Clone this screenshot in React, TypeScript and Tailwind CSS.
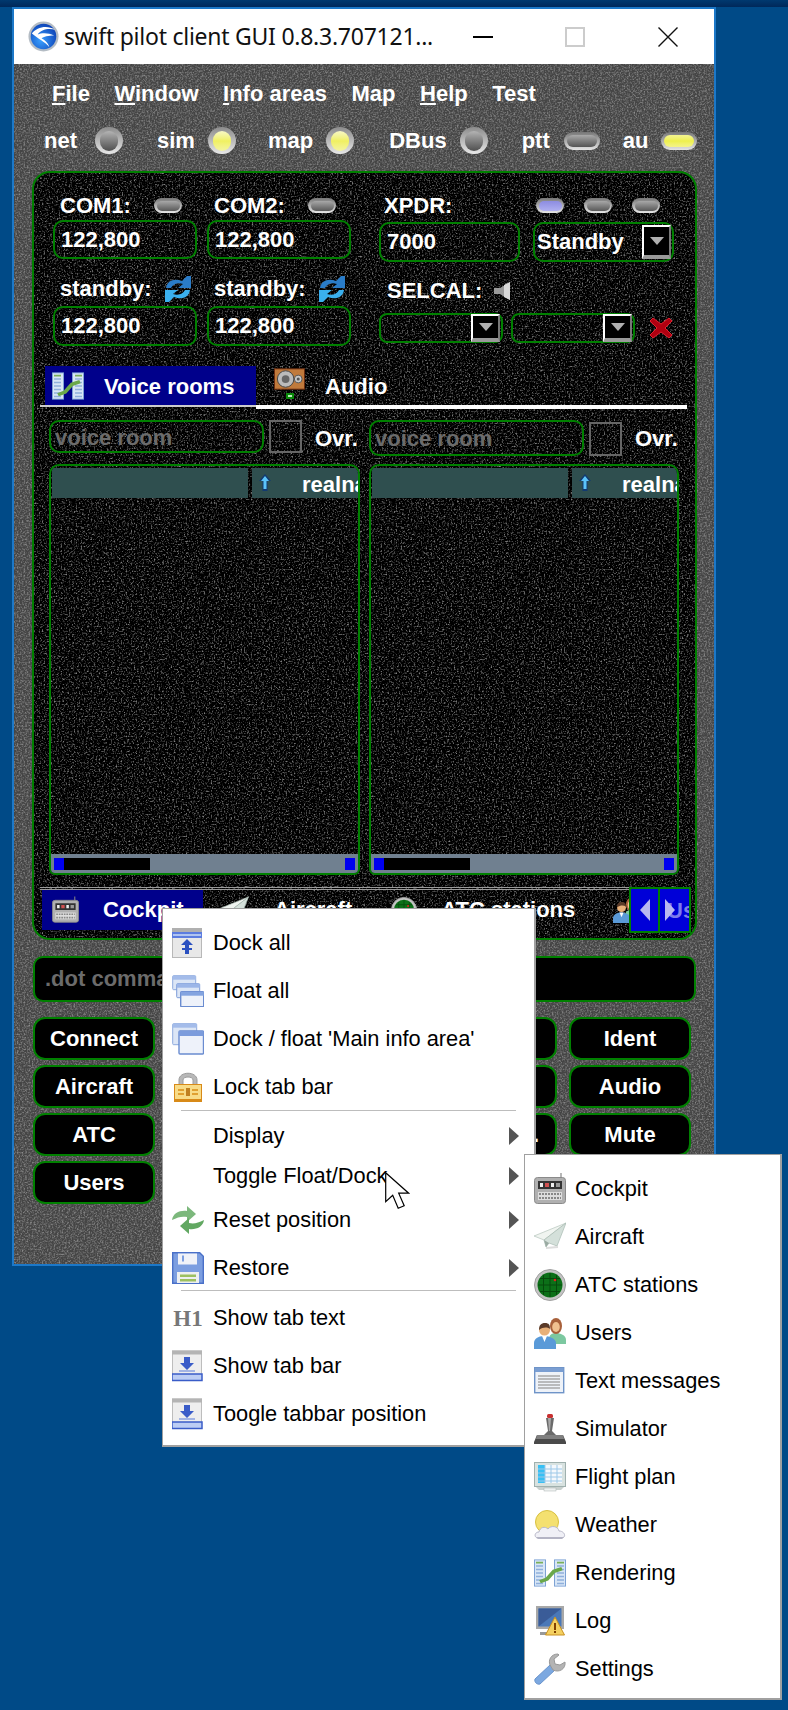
import React from "react";

type IconProps = { className?: string };

const label = "text-[22px] leading-none font-bold text-white whitespace-nowrap";
const faint = "text-[22px] leading-none font-bold whitespace-nowrap text-[#6b6b6b]";
const green = "border-2 border-[#008000]";

// noise texture laid over the grey window and the black panels
function Noise({ id, tone, gain, cut }: { id: string; tone: string; gain: string; cut: string }) {
  return (
    <svg className="absolute inset-0 h-full w-full pointer-events-none" aria-hidden="true">
      <filter id={id} x="0" y="0" width="100%" height="100%">
        <feTurbulence type="fractalNoise" baseFrequency="0.6" numOctaves="2" seed="4" />
        <feColorMatrix values={`0 0 0 0 ${tone} 0 0 0 0 ${tone} 0 0 0 0 ${tone} ${gain} 0 0 0 ${cut}`} />
      </filter>
      <rect width="100%" height="100%" filter={`url(#${id})`} />
    </svg>
  );
}

function Led({ on }: { on?: boolean }) {
  return (
    <div className="flex h-[27px] w-[28px] shrink-0 items-center justify-center rounded-full bg-linear-to-b from-[#8c8c8c] to-[#e8e8e8]">
      {on ? (
        <div className="h-[20px] w-[18px] rounded-full bg-linear-to-b from-[#f8f8c4] via-[#f0f060] to-[#f4f4a0]" />
      ) : (
        <div className="h-[20px] w-[18px] rounded-full bg-linear-to-b from-[#b4b4b4] to-[#505050]" />
      )}
    </div>
  );
}

function Pill({ kind = "off", className = "" }: { kind?: "off" | "blue"; className?: string }) {
  const inner =
    kind === "blue"
      ? "bg-linear-to-b from-[#8c8ce0] to-[#b0b0f0]"
      : "bg-linear-to-b from-[#a8a8a8] to-[#5a5a5a]";
  return (
    <div className={`flex h-[15px] w-[28px] shrink-0 items-center justify-center rounded-full bg-linear-to-b from-[#777] to-[#e8e8e8] ${className}`}>
      <div className={`h-[10px] w-[23px] rounded-full ${inner}`} />
    </div>
  );
}

function DropButton({ big }: { big?: boolean }) {
  return (
    <div
      className={`flex shrink-0 items-center justify-center border-t-2 border-l-2 border-t-white border-l-white border-r-2 border-b-4 border-r-[#777] border-b-[#999] bg-black ${
        big ? "h-[34px] w-[29px]" : "h-[28px] w-[29px]"
      }`}
    >
      <svg viewBox="0 0 14 10" className="h-[10px] w-[14px]">
        <path d="M0 1h14L7 9z" fill="#b0b0b0" />
      </svg>
    </div>
  );
}

function Field({ text, className = "" }: { text: string; className?: string }) {
  return (
    <div className={`flex items-center rounded-[10px] ${green} pl-[6px] ${className}`}>
      <span className={label}>{text}</span>
    </div>
  );
}

function SwiftLogo() {
  return (
    <svg viewBox="0 0 32 32" className="h-[31px] w-[31px] shrink-0">
      <defs>
        <radialGradient id="lg" cx="0.4" cy="0.65" r="0.7">
          <stop offset="0" stopColor="#3aa0ff" />
          <stop offset="1" stopColor="#0b3fb4" />
        </radialGradient>
      </defs>
      <circle cx="16" cy="16" r="15.5" fill="#b4bcc4" />
      <circle cx="16" cy="16" r="13.2" fill="url(#lg)" />
      <path d="M4 13C9 6 20 4 28 9 21 7 13 9 10 14c4-2 11-2 17 1-6 0-11 1-13 3 3 1 7 5 8 9-4-5-12-9-18-14z" fill="#fff" />
    </svg>
  );
}

function RoomsIcon() {
  return (
    <svg viewBox="0 0 32 32" preserveAspectRatio="none" className="h-[28px] w-[32px] shrink-0">
      <rect x="0.500" y="1" width="11" height="30" fill="#d8e6f6" stroke="#7da2d4" />
      <rect x="20.500" y="1" width="11" height="30" fill="#d8e6f6" stroke="#7da2d4" />
      <path d="M2 8h7M2 12h7M2 16h7M2 20h7M2 24h7M2 28h7M23 8h7M23 12h7M23 16h7M23 20h7M23 24h7M23 28h7" stroke="#8fb0dc" strokeWidth="1.600" />
      <path d="M2 4h7M23 4h7" stroke="#7ab05a" strokeWidth="2" />
      <path d="M6 26l7-3 7-9 8-3" fill="none" stroke="#6aa84a" strokeWidth="4" />
    </svg>
  );
}

function SpeakerBoxIcon() {
  return (
    <svg viewBox="0 0 32 22" className="h-[22px] w-[31px] shrink-0">
      <rect x="0.500" y="0.500" width="31" height="21" fill="#c07a3c" stroke="#6a2c10" />
      <circle cx="12" cy="11" r="8.500" fill="#bbb" stroke="#444" />
      <circle cx="12" cy="11" r="4" fill="#666" />
      <circle cx="25" cy="11" r="4" fill="#c8c8c8" stroke="#555" />
      <circle cx="25" cy="11" r="1.600" fill="#555" />
    </svg>
  );
}

function CockpitIcon({ className = "h-[32px] w-[32px]" }: IconProps) {
  return (
    <svg viewBox="0 0 32 32" className={`shrink-0 ${className}`}>
      <path d="M27 0v5" stroke="#888" strokeWidth="1.200" />
      <rect x="0.500" y="4.500" width="31" height="26" rx="3" fill="#b0b0b0" stroke="#8a8a8a" />
      <rect x="4" y="8" width="24" height="8" fill="#333" />
      <path d="M6 10h3v4H6zM17 10h3v4h-3z" fill="#eee" />
      <path d="M11 10h4v4h-4z" fill="#d05050" />
      <path d="M22 10h4v4h-4z" fill="#999" />
      <rect x="4" y="19" width="24" height="8" fill="#ddd" />
      <path d="M5 21h22M5 25h22" stroke="#888" strokeWidth="2" strokeDasharray="2 1" />
    </svg>
  );
}

function PlaneIcon({ className = "h-[32px] w-[32px]" }: IconProps) {
  return (
    <svg viewBox="0 0 32 32" className={`shrink-0 ${className}`}>
      <path d="M0 15L32 2 10 19z" fill="#f0f4f0" stroke="#b4c4bc" strokeWidth="0.700" />
      <path d="M32 2L10 19l2 7 3-4 8 3z" fill="#d4e0da" stroke="#a8bab2" strokeWidth="0.700" />
      <path d="M10 19l2 7 3-4z" fill="#9aaaa2" />
      <path d="M12 27l12-1" stroke="#ddd" strokeWidth="2" />
    </svg>
  );
}

function RadarIcon({ className = "h-[32px] w-[32px]" }: IconProps) {
  return (
    <svg viewBox="0 0 32 32" className={`shrink-0 ${className}`}>
      <circle cx="16" cy="16" r="15.500" fill="#c4c4c4" stroke="#a0a0a0" />
      <circle cx="16" cy="16" r="12.500" fill="#0c7018" />
      <path d="M16 4v24M4 16h24M6 9.500h20M6 22.500h20M9.500 6v20M22.500 6v20" stroke="#064a0c" strokeWidth="1" />
      <circle cx="21" cy="11" r="1.300" fill="#e02020" />
    </svg>
  );
}

function UsersIcon({ className = "h-[32px] w-[32px]" }: IconProps) {
  return (
    <svg viewBox="0 0 32 32" className={`shrink-0 ${className}`}>
      <path d="M15 27v-5c0-4 3-6 7-6s10 2 10 7v4z" fill="#7cc8a0" />
      <ellipse cx="22" cy="9" rx="6" ry="8" fill="#a8603a" />
      <ellipse cx="22" cy="10" rx="3.800" ry="5" fill="#f0c090" />
      <path d="M0 32v-6c0-4 4-7 10-7s12 3 12 7v6z" fill="#5a9ad8" />
      <path d="M8 19h5l-2.500 6z" fill="#fff" />
      <circle cx="10.500" cy="13" r="5.500" fill="#e8b078" />
      <path d="M5 13c0-5 2-7 6-7s5 2 5 6c-3-2-7-2-11 1z" fill="#5a3a28" />
    </svg>
  );
}

function TextIcon() {
  return (
    <svg viewBox="0 0 32 32" className="h-[32px] w-[32px] shrink-0">
      <rect x="0.700" y="2.700" width="29" height="25" fill="#eef2f8" stroke="#6f94c8" strokeWidth="1.400" />
      <rect x="1" y="3" width="28.500" height="4" fill="#7a9ed2" />
      <path d="M4 11h22M4 14h22M4 17h22M4 20h22M4 23h22" stroke="#a8a8a8" strokeWidth="1.500" />
    </svg>
  );
}

function JoystickIcon() {
  return (
    <svg viewBox="0 0 32 32" className="h-[32px] w-[32px] shrink-0">
      <path d="M0 29l3-7h26l3 7v2H0z" fill="#4a4a4a" />
      <path d="M3 22h26l1 4H2z" fill="#808080" />
      <path d="M12 5h8l-2 13 4 4H10l4-4z" fill="#6a6a6a" />
      <path d="M14 5h3l-1 13h-1z" fill="#aaa" />
      <rect x="13" y="1" width="6" height="4" rx="1.500" fill="#c83030" />
    </svg>
  );
}

function PlanIcon() {
  return (
    <svg viewBox="0 0 32 32" className="h-[32px] w-[32px] shrink-0">
      <rect x="0.500" y="1.500" width="31" height="24" fill="#d8e2e0" stroke="#9fb0ae" />
      <rect x="4" y="4" width="24" height="18" fill="#f4f8fc" />
      <rect x="4" y="4" width="7" height="18" fill="#38c0f4" />
      <path d="M4 8h24M4 12h24M4 16h24M4 20h24M11 4v18M17 4v18M23 4v18" stroke="#9cc8e8" strokeWidth="1" />
      <path d="M2 26h28l-3 3H5z" fill="#c8d0ce" />
      <rect x="10" y="27" width="12" height="3" fill="#eef0f0" stroke="#aab4b2" strokeWidth="0.500" />
    </svg>
  );
}

function WeatherIcon() {
  return (
    <svg viewBox="0 0 32 32" className="h-[32px] w-[32px] shrink-0">
      <circle cx="13" cy="13" r="11.500" fill="#f4e070" stroke="#d8c040" />
      <path d="M4 29c-4 0-4-6 1-6 1-5 6-6 9-3 3-4 10-3 11 2 6 0 8 7 2 7z" fill="#f0f0f6" stroke="#b8b8c8" />
      <path d="M2 28h28l-2 2H4z" fill="#b4b4c4" />
    </svg>
  );
}

function LogIcon() {
  return (
    <svg viewBox="0 0 32 32" className="h-[32px] w-[32px] shrink-0">
      <rect x="2" y="1" width="28" height="23" fill="#a8a8a8" />
      <rect x="4.500" y="3.500" width="23" height="18" fill="#4a78b8" />
      <path d="M4.500 3.500h23L4.500 21.500z" fill="#3a5c98" />
      <path d="M6 27h13v3H6z" fill="#999" />
      <path d="M21 12l9.500 18h-19z" fill="#f4d060" stroke="#c89020" />
      <path d="M20 18h2v7h-2zM20 26h2v2h-2z" fill="#804000" />
    </svg>
  );
}

function WrenchIcon() {
  return (
    <svg viewBox="0 0 32 32" className="h-[32px] w-[32px] shrink-0">
      <path d="M1 26L16 12l5 5L6 31c-3 1-6-2-5-5z" fill="#7ca8e0" stroke="#6a94cc" />
      <path d="M16 12c-2-5 1-11 8-11l1 1-5 4 1 5 5 1 5-3c1 7-6 11-12 8z" fill="#b4b4b4" stroke="#989898" />
    </svg>
  );
}

function DockIcon() {
  return (
    <svg viewBox="0 0 32 32" className="h-[32px] w-[32px] shrink-0">
      <rect x="0.500" y="1.500" width="29" height="29" fill="#e8e8e8" stroke="#b8b8b8" />
      <rect x="0" y="1" width="30" height="4" fill="#b0b0b0" />
      <rect x="0" y="5" width="30" height="6" fill="#5c7ce0" />
      <rect x="1" y="7" width="28" height="2" fill="#b0c4f0" />
      <path d="M15 12l6 6h-4v3h3v2h-3v4h-4v-4h-3v-2h3v-3H9z" fill="#2a50c0" />
    </svg>
  );
}

function FloatAllIcon() {
  return (
    <svg viewBox="0 0 32 32" className="h-[32px] w-[32px] shrink-0">
      <rect x="0.700" y="0.700" width="23" height="14" rx="1" fill="#dce6f6" stroke="#8eaade" />
      <rect x="0.700" y="0.700" width="23" height="4" fill="#a4bcea" />
      <rect x="4.700" y="8.700" width="23" height="14" rx="1" fill="#dce6f6" stroke="#7d9cd8" />
      <rect x="4.700" y="8.700" width="23" height="4" fill="#9cb6e8" />
      <rect x="8.700" y="16.700" width="23" height="15" rx="1" fill="#eef2fa" stroke="#6a8cd0" strokeWidth="1.400" />
      <rect x="8.700" y="16.700" width="23" height="4" fill="#84a4e0" />
    </svg>
  );
}

function FloatOneIcon() {
  return (
    <svg viewBox="0 0 32 32" className="h-[32px] w-[32px] shrink-0">
      <rect x="0.700" y="0.700" width="24" height="21" rx="1" fill="#dce6f6" stroke="#8eaade" />
      <rect x="0.700" y="0.700" width="24" height="4" fill="#a4bcea" />
      <rect x="7" y="8" width="24.500" height="23" rx="1" fill="#eef2fa" stroke="#6a8cd0" strokeWidth="1.400" />
      <rect x="7" y="8" width="24.500" height="5" fill="#7c9cdc" />
    </svg>
  );
}

function LockIcon() {
  return (
    <svg viewBox="0 0 32 32" className="h-[32px] w-[32px] shrink-0">
      <path d="M7 14V9c0-9 18-9 18 0v5h-4V9c0-4-10-4-10 0v5z" fill="#b8b8b8" stroke="#9c9c9c" />
      <rect x="2.500" y="13.500" width="27" height="17" fill="#f8dc88" stroke="#d88a18" />
      <rect x="2.500" y="28" width="27" height="2.500" fill="#d88a18" />
      <path d="M6 18h6v2H6zM6 22h6v2H6zM20 18h6v2h-6zM20 22h6v2h-6z" fill="#e0a030" />
      <path d="M14 17h4v8h-4z" fill="#c08020" />
    </svg>
  );
}

function ResetIcon() {
  return (
    <svg viewBox="0 0 32 32" className="h-[32px] w-[32px] shrink-0">
      <path d="M0 16c1-7 8-10 15-9V2l9 8-9 8v-5c-5-1-9 0-15 3z" fill="#7cb87c" />
      <path d="M32 16c-1 7-8 10-15 9v5l-9-8 9-8v5c5 1 9 0 15-3z" fill="#62a862" />
    </svg>
  );
}

function SaveIcon() {
  return (
    <svg viewBox="0 0 32 32" className="h-[32px] w-[32px] shrink-0">
      <path d="M0.700 0.700h27l3.600 3.600v27H0.700z" fill="#7c9ee0" stroke="#4a70c8" strokeWidth="1.400" />
      <rect x="6" y="1.500" width="19" height="11" fill="#f0f2f8" />
      <rect x="10" y="3.500" width="2" height="6" fill="#7c9ee0" />
      <rect x="5" y="20" width="22" height="11" fill="#eef0f0" />
      <path d="M8 22.500h16v2.500H8zM8 27h16v2.500H8z" fill="#9cc060" />
    </svg>
  );
}

function TabBarIcon() {
  return (
    <svg viewBox="0 0 32 32" className="h-[32px] w-[32px] shrink-0">
      <rect x="0.500" y="1" width="29" height="29" fill="#eee" stroke="#bdbdbd" />
      <rect x="0" y="0.500" width="30" height="4" fill="#b4b4b4" />
      <path d="M12 7h6v6h4l-7 7-7-7h4z" fill="#3a5cc8" />
      <path d="M7 21h16" stroke="#8aa0e0" strokeWidth="1.500" />
      <rect x="0" y="24" width="30" height="6.500" fill="#bccdf4" stroke="#3a5cc8" strokeWidth="1.500" />
    </svg>
  );
}

function SubArrow() {
  return (
    <svg viewBox="0 0 10 18" className="absolute top-1/2 left-[346px] h-[18px] w-[10px] -translate-y-1/2">
      <path d="M0 0l10 9-10 9z" fill="#555" />
    </svg>
  );
}

function SwapIcon() {
  return (
    <svg viewBox="0 0 28 28" className="h-[28px] w-[28px] shrink-0">
      <path d="M2 13C3 5 11 3 18 6l5-5h4v12H14l5-4c-5-2-10 0-12 4z" fill="#2a7cc8" />
      <path d="M26 15c-1 8-9 10-16 7l-5 5H1V15h13l-5 4c5 2 10 0 12-4z" fill="#3ab0ee" />
    </svg>
  );
}

function MenuItem({ icon, text, arrow, short }: { icon?: React.ReactNode; text: string; arrow?: boolean; short?: boolean }) {
  return (
    <div className={`relative flex items-center pl-[9px] ${short ? "h-[40px]" : "h-[48px]"}`}>
      <div className="flex w-[32px] shrink-0 items-center justify-center">{icon}</div>
      <span className="ml-[9px] text-[21.8px] leading-none whitespace-nowrap text-black">{text}</span>
      {arrow && <SubArrow />}
    </div>
  );
}

function Table() {
  return (
    <div className={`relative flex h-[411px] flex-col overflow-hidden rounded-t-[10px] rounded-b-[6px] bg-black ${green}`}>
      <Noise id="ntable" tone="0.22" gain="3" cut="-1.5" />
      <div className="relative mt-[2px] flex h-[30px] shrink-0 gap-[4px] pl-[1px]">
        <div className="w-[196px] shrink-0 bg-[#2f4f4f]" />
        <div className="flex flex-1 items-center overflow-hidden bg-[#2f4f4f] pl-[6px]">
          <svg viewBox="0 0 14 20" className="h-[20px] w-[14px] shrink-0">
            <path d="M7 1l6 7H9.500v10h-5V8H1z" fill="#123a70" />
            <path d="M7 3l4 5H8.500v8h-3V8H3z" fill="#5cc4f8" />
          </svg>
          <span className={`${label} mt-[3px] ml-[30px]`}>realname</span>
        </div>
      </div>
      <div className="flex-1" />
      <div className="relative flex h-[19px] shrink-0 items-center justify-between bg-[#708090] px-[3px]">
        <div className="flex items-center">
          <div className="h-[12px] w-[10px] bg-[#0000f0]" />
          <div className="h-[12px] w-[86px] bg-black" />
        </div>
        <div className="h-[12px] w-[10px] bg-[#0000f0]" />
      </div>
    </div>
  );
}

function CmdButton({ text }: { text?: string }) {
  return (
    <div className={`flex h-[43px] items-center justify-center rounded-[12px] bg-black ${green}`}>
      {text && <span className={label}>{text}</span>}
    </div>
  );
}

export default function App() {
  return (
    <div className="relative h-[1710px] w-[788px] overflow-hidden bg-[#004a87] font-['Liberation_Sans',Arial,sans-serif]">
      <div className="h-[7px] bg-linear-to-b from-[#00396f] to-[#00285a]" />

      {/* main window */}
      <div className="ml-[12px] flex h-[1259px] w-[704px] flex-col border-x-2 border-y-2 border-[#1c78c8]">
        <div className="flex h-[55px] shrink-0 items-center bg-white pl-[14px]">
          <SwiftLogo />
          <span className="ml-[5px] w-[370px] text-[23px] leading-none font-['Noto_Sans',sans-serif] tracking-[-0.25px] whitespace-nowrap text-[#111]">
            swift pilot client GUI 0.8.3.707121...
          </span>
          <div className="ml-[39px] h-[2px] w-[20px] bg-black" />
          <div className="ml-[72px] h-[20px] w-[20px] border-2 border-[#ccc]" />
          <svg viewBox="0 0 20 20" className="ml-[73px] h-[20px] w-[20px]">
            <path d="M0.500 0.500l19 19M19.500 0.500l-19 19" stroke="#111" strokeWidth="1.400" />
          </svg>
        </div>

        <div className="relative flex-1 bg-[#454545]">
          <Noise id="nbody" tone="0.6" gain="1.2" cut="-0.5" />

          {/* menu bar */}
          <div className="relative flex gap-[24.5px] pt-[19px] pl-[38px]">
            <span className={label}><u>F</u>ile</span>
            <span className={label}><u>W</u>indow</span>
            <span className={label}><u>I</u>nfo areas</span>
            <span className={label}>Map</span>
            <span className={label}><u>H</u>elp</span>
            <span className={label}>Test</span>
          </div>

          {/* status leds */}
          <div className="relative mt-[22px] flex h-[27px] items-center pl-[30px]">
            <span className={label}>net</span>
            <div className="ml-[18px]"><Led /></div>
            <span className={`${label} ml-[34px]`}>sim</span>
            <div className="ml-[13px]"><Led on /></div>
            <span className={`${label} ml-[32px]`}>map</span>
            <div className="ml-[13px]"><Led on /></div>
            <span className={`${label} ml-[35px]`}>DBus</span>
            <div className="ml-[13px]"><Led /></div>
            <span className={`${label} ml-[34px]`}>ptt</span>
            <div className="ml-[14px] flex h-[18px] w-[36px] items-center justify-center rounded-full bg-linear-to-b from-[#777] to-[#e4e4e4]">
              <div className="h-[12px] w-[30px] rounded-full bg-linear-to-b from-[#aaa] to-[#555]" />
            </div>
            <span className={`${label} ml-[23px]`}>au</span>
            <div className="ml-[13px] flex h-[18px] w-[36px] items-center justify-center rounded-full bg-linear-to-b from-[#777] to-[#e4e4e4]">
              <div className="h-[12px] w-[30px] rounded-full bg-linear-to-b from-[#f4f490] via-[#eef04c] to-[#f4f488]" />
            </div>
          </div>

          {/* cockpit panel */}
          <div className={`relative mt-[17px] ml-[18px] h-[769px] w-[665px] overflow-hidden rounded-[18px] bg-black ${green}`}>
            <Noise id="npanel" tone="0.22" gain="3" cut="-1.5" />

            <div className="relative flex pt-[18px] pl-[19px]">
              <div className="w-[144px]">
                <div className="flex h-[29px] items-center pl-[7px]">
                  <span className={`${label} w-[94px]`}>COM1:</span>
                  <Pill />
                </div>
                <Field text="122,800" className="h-[39px]" />
                <div className="mt-[13px] flex h-[34px] items-center pl-[7px]">
                  <span className={`${label} w-[104px]`}>standby:</span>
                  <SwapIcon />
                </div>
                <Field text="122,800" className="h-[40px]" />
              </div>
              <div className="ml-[10px] w-[144px]">
                <div className="flex h-[29px] items-center pl-[7px]">
                  <span className={`${label} w-[94px]`}>COM2:</span>
                  <Pill />
                </div>
                <Field text="122,800" className="h-[39px]" />
                <div className="mt-[13px] flex h-[34px] items-center pl-[7px]">
                  <span className={`${label} w-[104px]`}>standby:</span>
                  <SwapIcon />
                </div>
                <Field text="122,800" className="h-[40px]" />
              </div>
              <div className="ml-[28px] w-[296px]">
                <div className="flex h-[29px] items-center pl-[5px]">
                  <span className={`${label} w-[152px]`}>XPDR:</span>
                  <Pill kind="blue" />
                  <Pill className="ml-[20px]" />
                  <Pill className="ml-[20px]" />
                </div>
                <div className="mt-[2px] flex gap-[13px]">
                  <Field text="7000" className="h-[40px] w-[141px]" />
                  <div className={`flex h-[40px] w-[141px] items-center justify-between rounded-[10px] ${green} pr-[1px] pl-[2px]`}>
                    <span className={label}>Standby</span>
                    <DropButton big />
                  </div>
                </div>
                <div className="mt-[18px] flex h-[22px] items-center pl-[8px]">
                  <span className={`${label} w-[107px]`}>SELCAL:</span>
                  <svg viewBox="0 0 17 18" className="h-[18px] w-[17px]">
                    <path d="M0 6h6l10-6v18L6 12H0z" fill="#9a9a9a" />
                    <path d="M10 3l6-3v18l-6-3z" fill="#d8d8d8" />
                  </svg>
                </div>
                <div className="mt-[11px] flex items-center gap-[8px]">
                  <div className={`flex h-[30px] w-[124px] items-center justify-end rounded-[8px] ${green} pr-[1px]`}>
                    <DropButton />
                  </div>
                  <div className={`flex h-[30px] w-[124px] items-center justify-end rounded-[8px] ${green} pr-[1px]`}>
                    <DropButton />
                  </div>
                  <svg viewBox="0 0 24 22" className="ml-[6px] h-[22px] w-[24px]">
                    <path d="M4 1l8 6 8-6 3 3-7 7 7 7-3 3-8-6-8 6-3-3 7-7-7-7z" fill="#b00010" stroke="#e02030" strokeWidth="1" />
                  </svg>
                </div>
              </div>
            </div>

            {/* voice / audio tabs */}
            <div className="relative mt-[20px] flex h-[39px] pl-[11px]">
              <div className="flex w-[211px] items-center bg-[#00008b] pl-[7px]">
                <RoomsIcon />
                <span className={`${label} mt-[2px] ml-[20px]`}>Voice rooms</span>
              </div>
              <div className="ml-[18px] flex flex-col items-center pt-[2px]">
                <SpeakerBoxIcon />
                <div className="mt-[3px] flex h-[6px] w-[8px] items-center justify-center bg-[#0a8a0a]">
                  <div className="h-[2px] w-[4px] bg-[#bfe8bf]" />
                </div>
              </div>
              <span className={`${label} mt-[10px] ml-[20px]`}>Audio</span>
            </div>
            <div className="relative ml-[6px] flex w-[647px]">
              <div className="h-[2px] w-[216px] bg-[#ccc]" />
              <div className="h-[4px] flex-1 bg-white" />
            </div>

            {/* voice rooms */}
            <div className="relative mt-[11px] ml-[15px] flex gap-[9px]">
              <div className="w-[311px]">
                <div className="flex h-[36px] items-start">
                  <div className={`flex h-[33px] w-[215px] items-center rounded-[10px] ${green} pl-[4px]`}>
                    <span className={`${faint} mt-[2px]`}>voice room</span>
                  </div>
                  <div className="ml-[5px] h-[33px] w-[33px] border-2 border-[#666]" />
                  <span className={`${label} mt-[8px] ml-[13px]`}>Ovr.</span>
                </div>
                <div className="mt-[8px]"><Table /></div>
              </div>
              <div className="w-[310px]">
                <div className="flex h-[36px] items-center">
                  <div className={`flex h-[36px] w-[215px] items-center rounded-[10px] ${green} pl-[4px]`}>
                    <span className={`${faint} mt-[2px]`}>voice room</span>
                  </div>
                  <div className="mt-[2px] ml-[5px] h-[34px] w-[33px] border-2 border-[#666]" />
                  <span className={`${label} mt-[2px] ml-[13px]`}>Ovr.</span>
                </div>
                <div className="mt-[8px]"><Table /></div>
              </div>
            </div>

            {/* info area tabs */}
            <div className="relative mt-[12px] ml-[6px] h-[3px] w-[589px] border-y border-[#999]" />
            <div className="relative flex h-[40px] w-[660px] items-center overflow-hidden pl-[8px]">
              <div className="flex h-[40px] w-[161px] shrink-0 items-center bg-[#00008b] pl-[10px]">
                <CockpitIcon className="h-[28px] w-[27px]" />
                <span className={`${label} ml-[24px]`}>Cockpit</span>
              </div>
              <PlaneIcon className="ml-[14px] h-[30px] w-[33px]" />
              <span className={`${label} ml-[24px]`}>Aircraft</span>
              <RadarIcon className="ml-[39px] h-[26px] w-[26px]" />
              <span className={`${label} ml-[24px]`}>ATC stations</span>
              <UsersIcon className="ml-[38px] h-[28px] w-[26px]" />
            </div>
            <div className="absolute top-[714px] left-[595px] flex h-[46px]">
              <div className="flex w-[31px] items-center justify-center border-2 border-[#008000] bg-[#0000d8]">
                <svg viewBox="0 0 10 22" className="h-[22px] w-[10px]"><path d="M10 0L0 11l10 11z" fill="#b8b8f0" /></svg>
              </div>
              <div className="relative flex w-[31px] items-center justify-start overflow-hidden border-2 border-l-0 border-[#008000] bg-[#0000d8] pl-[5px]">
                <span className="absolute top-[11px] left-[7px] text-[22px] leading-none font-bold text-[#7c7cec]">Users</span>
                <svg viewBox="0 0 10 22" className="relative h-[22px] w-[10px]"><path d="M0 0l10 11L0 22z" fill="#b8b8f0" /></svg>
              </div>
            </div>
          </div>

          {/* command line */}
          <div className={`relative mt-[16px] ml-[19px] flex h-[46px] w-[663px] items-center rounded-[10px] bg-black ${green} pl-[10px]`}>
            <span className={faint}>.dot commands</span>
          </div>

          {/* main buttons */}
          <div className="relative mt-[15px] ml-[19px] grid w-[659px] grid-cols-[122px_122px_122px_122px_122px] gap-x-[12px] gap-y-[5px]">
            <CmdButton text="Connect" />
            <CmdButton />
            <CmdButton />
            <CmdButton />
            <CmdButton text="Ident" />
            <CmdButton text="Aircraft" />
            <CmdButton />
            <CmdButton />
            <CmdButton />
            <CmdButton text="Audio" />
            <CmdButton text="ATC" />
            <CmdButton />
            <CmdButton />
            <div className={`flex h-[43px] items-center justify-end rounded-[12px] bg-black ${green} pr-[16px]`}>
              <span className={label}>.</span>
            </div>
            <CmdButton text="Mute" />
            <CmdButton text="Users" />
          </div>
        </div>
      </div>

      {/* context menu */}
      <div className="absolute top-[908px] left-[162px] h-[539px] w-[374px] border border-r-2 border-b-2 border-[#a0a0a0] bg-white pt-[10px]">
        <MenuItem icon={<DockIcon />} text="Dock all" />
        <MenuItem icon={<FloatAllIcon />} text="Float all" />
        <MenuItem icon={<FloatOneIcon />} text="Dock / float 'Main info area'" />
        <MenuItem icon={<LockIcon />} text="Lock tab bar" />
        <div className="mx-[18px] mt-[-1px] mb-[5px] h-px bg-[#bdbdbd]" />
        <MenuItem text="Display" arrow short />
        <MenuItem text="Toggle Float/Dock" arrow short />
        <MenuItem icon={<ResetIcon />} text="Reset position" arrow />
        <MenuItem icon={<SaveIcon />} text="Restore" arrow />
        <div className="mx-[18px] mt-[-2px] mb-[3px] h-px bg-[#bdbdbd]" />
        <MenuItem icon={<span className="font-['Liberation_Serif',serif] text-[23px] leading-none font-bold text-[#777]">H1</span>} text="Show tab text" />
        <MenuItem icon={<TabBarIcon />} text="Show tab bar" />
        <MenuItem icon={<TabBarIcon />} text="Toogle tabbar position" />
      </div>

      {/* sub menu */}
      <div className="absolute top-[1154px] left-[524px] h-[546px] w-[258px] border border-r-2 border-b-2 border-[#a0a0a0] bg-white pt-[10px]">
        <MenuItem icon={<CockpitIcon />} text="Cockpit" />
        <MenuItem icon={<PlaneIcon />} text="Aircraft" />
        <MenuItem icon={<RadarIcon />} text="ATC stations" />
        <MenuItem icon={<UsersIcon />} text="Users" />
        <MenuItem icon={<TextIcon />} text="Text messages" />
        <MenuItem icon={<JoystickIcon />} text="Simulator" />
        <MenuItem icon={<PlanIcon />} text="Flight plan" />
        <MenuItem icon={<WeatherIcon />} text="Weather" />
        <MenuItem icon={<RoomsIcon />} text="Rendering" />
        <MenuItem icon={<LogIcon />} text="Log" />
        <MenuItem icon={<WrenchIcon />} text="Settings" />
      </div>

      {/* mouse pointer */}
      <svg viewBox="0 0 25 37" className="absolute top-[1172px] left-[385px] h-[37px] w-[25px]">
        <path d="M0.700 0.700v29l7-6.500 5.500 13 6-2.500-5.500-12.500h10z" fill="#fff" stroke="#000" strokeWidth="1.200" />
      </svg>
    </div>
  );
}
